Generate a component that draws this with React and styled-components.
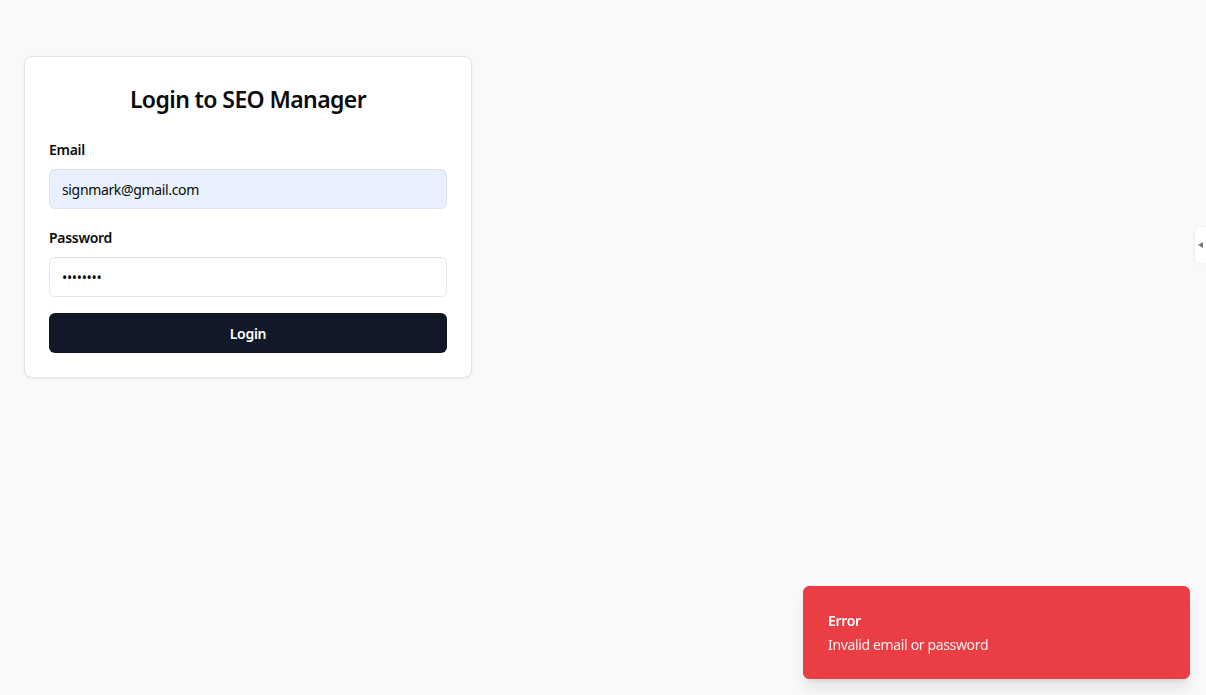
import React from "react";
import styled, { createGlobalStyle } from "styled-components";

const Global = createGlobalStyle`
  * { box-sizing: border-box; }
  html, body { margin: 0; padding: 0; background: #f8f9fb; }
  body { font-family: "Noto Sans", "Open Sans", sans-serif; color: #0a0a0a; }
`;

const Page = styled.div`
  min-height: 695px;
  padding: 56px 24px;
`;

const Card = styled.div`
  width: 448px;
  background: #fff;
  border: 1px solid #e2e4e8;
  border-radius: 8px;
  box-shadow: 0 1px 3px rgba(0,0,0,0.06);
  padding: 24px;
`;

const Title = styled.h1`
  margin: 0 0 23px;
  text-align: center;
  font-size: 23px;
  line-height: 36px;
  font-weight: 600;
  color: #0b0b0b;
  letter-spacing: -0.6px;
`;

const Form = styled.form`
  display: flex;
  flex-direction: column;
  gap: 16px;
`;

const Fields = styled.div`
  display: flex;
  flex-direction: column;
  gap: 19px;
`;

const Field = styled.div`
  display: flex;
  flex-direction: column;
  gap: 9px;
`;

const Label = styled.label`
  font-size: 14px;
  line-height: 20px;
  font-weight: 600;
  color: #0b0b0b;
  letter-spacing: -0.3px;
`;

const Input = styled.input`
  height: 40px;
  width: 100%;
  border: 1px solid ${p => (p.$filled ? "#dde3ee" : "#e2e4e8")};
  border-radius: 6px;
  background: ${p => (p.$filled ? "#e8f0fe" : "#fff")};
  padding: 0 12px;
  font-family: inherit;
  font-size: 14px;
  letter-spacing: -0.35px;
  color: #0b0b0b;
  outline: none;
`;

const Button = styled.button`
  height: 40px;
  border: 0;
  border-radius: 6px;
  background: #111827;
  color: #fff;
  font-family: inherit;
  font-size: 14px;
  font-weight: 600;
  letter-spacing: -0.3px;
  cursor: pointer;
`;

const Tab = styled.div`
  position: fixed;
  right: 0;
  top: 227px;
  width: 11px;
  height: 36px;
  background: #fff;
  border-radius: 6px 0 0 6px;
  box-shadow: -1px 0 3px rgba(0,0,0,0.06);
  display: flex;
  align-items: center;
  padding-left: 3px;
`;

const Toast = styled.div`
  position: fixed;
  right: 16px;
  bottom: 16px;
  width: 387px;
  background: #ea3e44;
  border: 1px solid #ea3e44;
  border-radius: 6px;
  padding: 24px 24px 23px;
  box-shadow: 0 10px 15px -3px rgba(0,0,0,0.12), 0 4px 6px -4px rgba(0,0,0,0.1);
  color: #fff;
  display: flex;
  flex-direction: column;
  gap: 4px;
`;

const ToastTitle = styled.div`
  font-size: 14px;
  line-height: 20px;
  font-weight: 600;
  letter-spacing: -0.3px;
`;

const ToastText = styled.div`
  font-size: 14px;
  line-height: 20px;
  letter-spacing: -0.35px;
  opacity: 0.9;
`;

export default function App() {
  return (
    <>
      <Global />
      <Page>
        <Card>
          <Title>Login to SEO Manager</Title>
          <Form onSubmit={e => e.preventDefault()}>
            <Fields>
              <Field>
                <Label>Email</Label>
                <Input $filled defaultValue="signmark@gmail.com" />
              </Field>
              <Field>
                <Label>Password</Label>
                <Input type="password" defaultValue="password" />
              </Field>
            </Fields>
            <Button type="submit">Login</Button>
          </Form>
        </Card>
      </Page>
      <Tab>
        <svg width="5" height="6" viewBox="0 0 5 6">
          <path d="M0 3 L5 0 L5 6 Z" fill="#777" />
        </svg>
      </Tab>
      <Toast>
        <ToastTitle>Error</ToastTitle>
        <ToastText>Invalid email or password</ToastText>
      </Toast>
    </>
  );
}
